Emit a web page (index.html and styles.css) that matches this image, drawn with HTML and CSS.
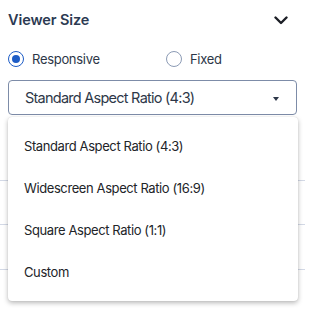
FILE: index.html
```html
<!DOCTYPE html>
<html>
<head>
<meta charset="utf-8">
<link rel="stylesheet" href="styles.css">
</head>
<body>
<div class="panel">
  <div class="header">
    <span class="title">Viewer Size</span>
    <svg class="chevron" width="14" height="9" viewBox="0 0 14 9"><path d="M1.5 1.5 L7 7 L12.5 1.5" fill="none" stroke="#1c1f26" stroke-width="2.4" stroke-linecap="round" stroke-linejoin="round"/></svg>
  </div>
  <div class="radios">
    <label class="radio"><span class="dot checked"></span><span class="rlabel">Responsive</span></label>
    <label class="radio"><span class="dot"></span><span class="rlabel">Fixed</span></label>
  </div>
  <div class="select">
    <span class="value">Standard Aspect Ratio (4:3)</span>
    <span class="caret"></span>
  </div>
</div>
<div class="below">
  <div class="row r1"></div>
  <div class="row r2"></div>
  <div class="row r3"></div>
  <div class="row r4"></div>
</div>
<div class="menu">
  <div class="item">Standard Aspect Ratio (4:3)</div>
  <div class="item">Widescreen Aspect Ratio (16:9)</div>
  <div class="item">Square Aspect Ratio (1:1)</div>
  <div class="item">Custom</div>
</div>
</body>
</html>
```
FILE: styles.css
```css
html, body {
  margin: 0;
  padding: 0;
  background: #ffffff;
  font-family: Inter, "Noto Sans", sans-serif;
}
body {
  width: 305px;
  height: 312px;
  overflow: hidden;
  position: relative;
}
.panel {
  padding: 10px 8px 0 8px;
}
.header {
  display: flex;
  justify-content: space-between;
  align-items: center;
  height: 20px;
}
.title {
  font-size: 14.5px;
  font-weight: 600;
  color: #2c3a52;
  line-height: 20px;
  letter-spacing: -0.1px;
}
.chevron {
  margin-right: 9px;
  margin-top: 1px;
}
.radios {
  display: flex;
  margin-top: 19px;
  height: 20px;
  align-items: center;
}
.radio {
  display: flex;
  align-items: center;
  flex: 0 0 158px;
}
.dot {
  width: 16px;
  height: 16px;
  flex: 0 0 16px;
  box-sizing: border-box;
  border-radius: 50%;
  border: 1px solid #8c9bb5;
  position: relative;
}
.dot.checked {
  border: 1.5px solid #1d5cc6;
}
.dot.checked::after {
  content: "";
  position: absolute;
  left: 50%;
  top: 50%;
  width: 8px;
  height: 8px;
  margin: -4px 0 0 -4px;
  border-radius: 50%;
  background: #1d5cc6;
}
.rlabel {
  margin-left: 8px;
  font-size: 13px;
  letter-spacing: -0.3px;
  color: #2d3748;
}
.select {
  margin-top: 11px;
  height: 35px;
  box-sizing: border-box;
  border: 1px solid #7d8ca8;
  border-radius: 4px;
  display: flex;
  align-items: center;
  justify-content: space-between;
  padding: 0 17px 0 16px;
}
.value {
  font-size: 14.5px;
  letter-spacing: -0.75px;
  color: #2d3748;
}
.caret {
  width: 0;
  height: 0;
  margin-top: 2px;
  border-left: 3.5px solid transparent;
  border-right: 3.5px solid transparent;
  border-top: 4px solid #2d3748;
}
.row {
  border-bottom: 1px solid #d3d9e6;
}
.r1 { height: 65px; }
.r2 { height: 43px; }
.r3 { height: 44px; }
.r4 { height: 40px; border-bottom: none; }
.menu {
  position: absolute;
  left: 8px;
  top: 117px;
  width: 290px;
  background: #ffffff;
  border-radius: 4px;
  box-shadow: 0 2px 5px rgba(0, 0, 0, 0.28), 0 0 1px rgba(0, 0, 0, 0.15);
  padding: 8px 0;
}
.item {
  height: 42px;
  display: flex;
  align-items: center;
  padding-left: 16px;
  font-size: 13px;
  letter-spacing: -0.4px;
  color: #222428;
}
```
